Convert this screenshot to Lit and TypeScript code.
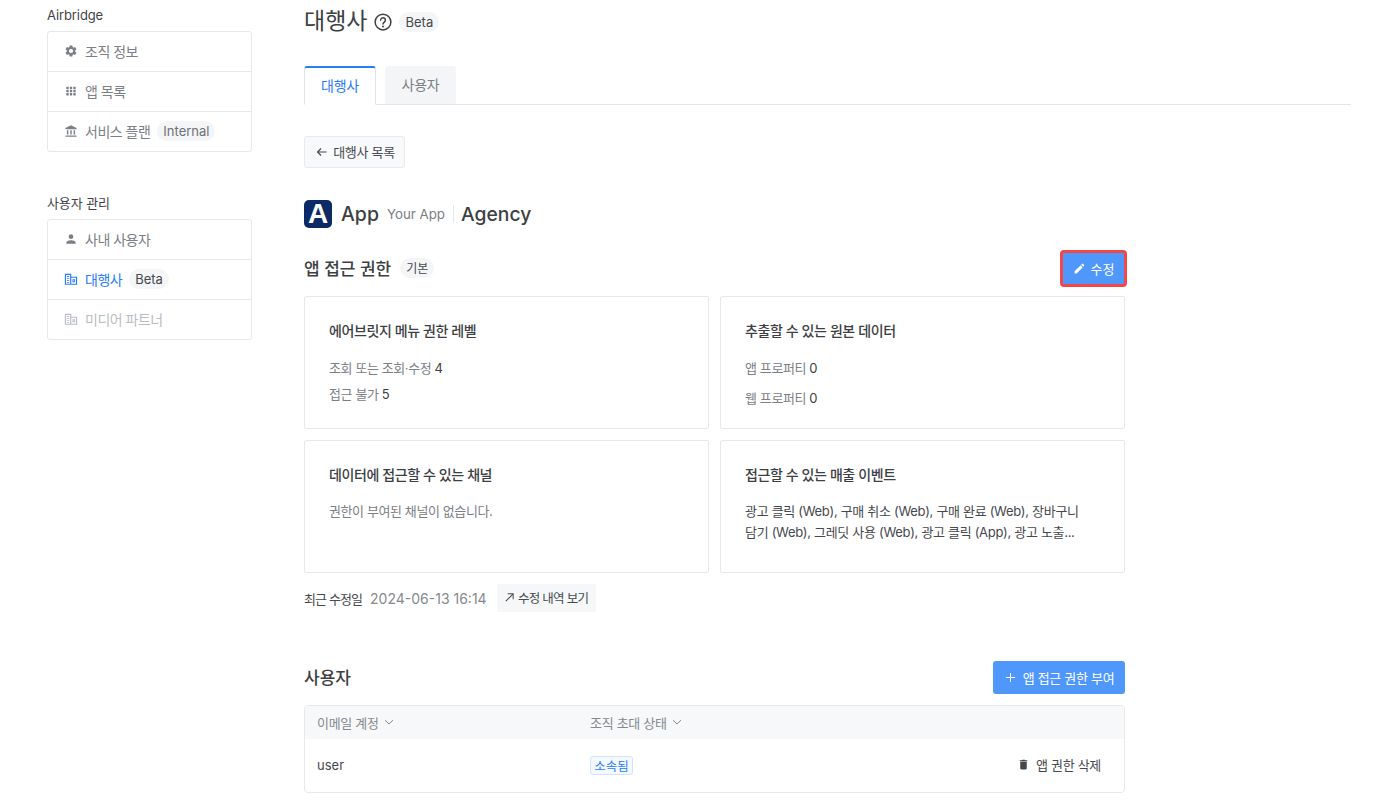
import { LitElement, html, css, svg } from "lit";
import { customElement } from "lit/decorators.js";

const ic = (p: unknown, s = 14, cls = "") => html`<svg class=${cls} width=${s} height=${s} viewBox="0 0 24 24" fill="currentColor">${p}</svg>`;
const gear = svg`<path d="M19.14 12.94c.04-.3.06-.61.06-.94s-.02-.64-.07-.94l2.03-1.58a.49.49 0 0 0 .12-.61l-1.92-3.32a.49.49 0 0 0-.59-.22l-2.39.96a7 7 0 0 0-1.62-.94l-.36-2.54a.48.48 0 0 0-.48-.41h-3.84a.48.48 0 0 0-.47.41l-.36 2.54c-.59.24-1.13.57-1.62.94l-2.39-.96a.49.49 0 0 0-.59.22L2.74 8.87a.48.48 0 0 0 .12.61l2.03 1.58c-.05.3-.09.63-.09.94s.02.64.07.94l-2.03 1.58a.49.49 0 0 0-.12.61l1.92 3.32c.12.22.37.29.59.22l2.39-.96c.5.38 1.03.7 1.62.94l.36 2.54c.05.24.24.41.48.41h3.84c.24 0 .44-.17.47-.41l.36-2.54c.59-.24 1.13-.56 1.62-.94l2.39.96c.22.08.47 0 .59-.22l1.92-3.32a.48.48 0 0 0-.12-.61l-2.01-1.58zM12 15.6a3.6 3.6 0 1 1 0-7.2 3.6 3.6 0 0 1 0 7.2z"/>`;
const apps = svg`<path d="M4 4.500h4v4H4zM10 4.500h4v4h-4zM16 4.500h4v4h-4zM4 10h4v4H4zM10 10h4v4h-4zM16 10h4v4h-4zM4 15.500h4v4H4zM10 15.500h4v4h-4zM16 15.500h4v4h-4z"/>`;
const bank = svg`<path d="M12 2 2.500 7v2h19V7L12 2zM5 10.500v7.500h2.500v-7.500H5zm5.750 0v7.500h2.500v-7.500h-2.500zm5.750 0v7.500H19v-7.500h-2.500zM2.500 19.500V22h19v-2.500h-19z"/>`;
const person = svg`<path d="M12 12a4 4 0 1 0 0-8 4 4 0 0 0 0 8zm0 2c-2.670 0-8 1.340-8 4v2h16v-2c0-2.660-5.330-4-8-4z"/>`;
const agency = svg`<path fill-rule="evenodd" d="M1.500 3h11v5h10v14h-21V3zm2 2v15h7V5h-7zm9 5v10h8V10h-8zM5 7h4v1.500H5zm0 3.500h4V12H5zM5 14h4v1.500H5zm0 3h4v1.500H5zM14.500 12.500h4.500v5h-4.500zm1.500 1.500v2h1.500v-2z"/>`;
const pencil = svg`<path d="M3 17.250V21h3.750L17.810 9.940l-3.750-3.750L3 17.250zM20.710 7.040a1 1 0 0 0 0-1.410l-2.340-2.340a1 1 0 0 0-1.410 0l-1.830 1.830 3.750 3.750 1.830-1.830z"/>`;
const trash = svg`<path d="M6 19c0 1.100.9 2 2 2h8c1.100 0 2-.9 2-2V7H6v12zM19 4h-3.500l-1-1h-5l-1 1H5v2h14V4z"/>`;
const chev = html`<svg class="chev" width="10" height="10" viewBox="0 0 10 10" fill="none" stroke="currentColor" stroke-width="1"><path d="M1 3.200 5 7l4-3.800"/></svg>`;

@customElement("app-root")
export class AppRoot extends LitElement {
  static styles = css`
    :host { display: block; width: 1400px; height: 800px; overflow: hidden; background: #fff; color: #3c4043;
      font-family: Inter, "Noto Sans CJK KR", sans-serif; font-size: 14px; }
    * { box-sizing: border-box; }
    .page { display: flex; align-items: flex-start; padding-left: 47px; }
    .side { width: 205px; flex: none; margin-right: 52px; padding-top: 7px; }
    .side-label { font-size: 13px; line-height: 16px; height: 24px; color: #3f4347; letter-spacing: -0.1px; }
    .menu { border: 1px solid #e6e8ec; border-radius: 3px; margin-bottom: 43px; }
    .mi { height: 40px; display: flex; align-items: center; padding: 0 0 2px 16px; gap: 7px; color: #7b8085; border-top: 1px solid #e6e8ec; font-size: 14px; }
    .mi:first-child { border-top: none; height: 39px; }
    .mi svg { flex: none; }
    .mi > span:not(.chip) { letter-spacing: -0.5px; }
    .mi.on { color: #2a7cf6; }
    .mi.off { color: #b9bdc2; }
    .chip { display: inline-flex; align-items: center; height: 20px; padding: 0 6px; border-radius: 10px; background: #f4f5f7; color: #44484c; font-size: 13px; }
    .mi .chip.grey { color: #6c7176; }
    .main { width: 1047px; flex: none; }
    .title-row { height: 66px; display: flex; align-items: flex-start; padding-top: 6px; }
    h1 { margin: 0; font-size: 23px; line-height: 30px; font-weight: 400; color: #3c4043; }
    .q { margin: 7px 0 0 7px; color: #3c4043; }
    .title-row .chip { margin: 6px 0 0 7px; }
    .tabs { display: flex; height: 39px; border-bottom: 1px solid #e3e5ea; gap: 9px; }
    .tab { height: 39px; width: 72px; display: flex; align-items: center; justify-content: center; font-size: 14px; background: #f4f5f7; color: #7b8085; border-radius: 3px 3px 0 0; padding-bottom: 2px; letter-spacing: -0.2px; }
    .tab.on { background: #fff; color: #2a7cf6; border: 1px solid #dfe3ea; border-top: 2px solid #2a7cf6; border-bottom: 1px solid #fff; }
    .tab.two { width: 71px; height: 38px; }
    .back { margin-top: 31px; display: flex; align-items: center; gap: 5px; height: 32px; width: 101px; justify-content: center; background: #f8f9fa; border: 1px solid #e8eaed; border-radius: 3px; font-size: 13px; color: #45494d; letter-spacing: -0.3px; padding: 0 0 1px 2px; }
    .brand { display: flex; align-items: center; height: 28px; margin-top: 32px; }
    .logo { width: 28px; height: 28px; flex: none; background: #0c2a66; border-radius: 5px; display: flex; align-items: center; justify-content: center; margin-right: 9px; color: #fff; font: 700 28px/1 "Liberation Sans", sans-serif; }
    .app { font-size: 19.500px; font-weight: 500; color: #3c4043; }
    .your { font-size: 13.300px; color: #7b8085; margin-left: 8px; }
    .sep { width: 1px; height: 18px; background: #e3e5ea; margin: 0 7px 0 8px; }
    .agency { font-size: 19.300px; font-weight: 500; color: #3c4043; }
    .content { width: 821px; }
    .sec { display: flex; align-items: center; justify-content: space-between; height: 37px; margin-top: 22px; }
    .sec-l { display: flex; align-items: center; padding-bottom: 2px; }
    h2 { margin: 0; font-size: 17px; font-weight: 500; color: #3c4043; }
    .sec-l .chip { font-size: 12px; margin-left: 9px; padding: 0 6px; }
    .edit { width: 67px; height: 37px; margin-right: -2px; border: 3px solid #f4474a; border-radius: 4px; background: #4f97fb; color: #fff; display: flex; align-items: center; justify-content: center; gap: 5px; font-size: 13px; padding-bottom: 1px; }
    .cards { display: grid; grid-template-columns: 405px 405px; grid-auto-rows: 133px; gap: 11px; margin-top: 9px; }
    .card { border: 1px solid #e6e8ec; border-radius: 2px; padding: 25px 24px 0; }
    .card h3 { margin: 0 0 19px; font-size: 14px; line-height: 18px; font-weight: 500; color: #3c4043; letter-spacing: -0.4px; }
    .line { font-size: 13px; line-height: 18px; color: #7b8085; margin-bottom: 8px; letter-spacing: -0.4px; }
    .line b { font-weight: 400; color: #3c4043; }
    .lines2 .line { margin-bottom: 12px; }
    .none { margin-top: -1px; }
    .txt { font-size: 13px; line-height: 21px; color: #45494d; margin-top: -2px; letter-spacing: -0.31px; }
    .foot { display: flex; align-items: center; height: 28px; margin-top: 11px; font-size: 13px; color: #45494d; letter-spacing: -0.9px; }
    .foot .date { color: #85898e; margin-left: 8px; font-size: 14px; letter-spacing: 0; }
    .hist { margin-left: 10px; width: 99px; height: 28px; display: flex; align-items: center; justify-content: center; gap: 3px; background: #f6f7f9; border-radius: 2px; font-size: 12.500px; color: #45494d; letter-spacing: -0.7px; padding-bottom: 1px; }
    .users { display: flex; align-items: center; justify-content: space-between; margin-top: 49px; height: 33px; }
    .users h2 { padding-bottom: 2px; }
    .add { width: 132px; height: 33px; background: #4f97fb; color: #fff; border-radius: 3px; display: flex; align-items: center; justify-content: center; gap: 7px; font-size: 13px; letter-spacing: -0.3px; padding: 0 0 1px 1px; }
    .table { margin-top: 11px; border: 1px solid #e6e8ec; border-radius: 4px; height: 88px; overflow: hidden; }
    .row { display: grid; grid-template-columns: 273px 1fr auto; align-items: center; padding: 0 23px 0 12px; }
    .head { height: 33px; background: #f7f8fa; color: #85898e; font-size: 13px; letter-spacing: -0.3px; padding-bottom: 1px; }
    .head span { display: flex; align-items: center; gap: 5px; }
    .body { height: 54px; font-size: 13px; color: #45494d; padding-bottom: 2px; }
    .tag { display: inline-flex; align-items: center; height: 19px; width: 43px; justify-content: center; border: 1px solid #cfe3fd; background: #f4f9ff; color: #2a7cf6; border-radius: 3px; font-size: 12.500px; }
    .del { display: flex; align-items: center; gap: 6px; color: #45494d; font-size: 13px; letter-spacing: -0.3px; padding-bottom: 2px; }
  `;

  render() {
    return html`<div class="page">
      <aside class="side">
        <div class="side-label">Airbridge</div>
        <div class="menu">
          <div class="mi">${ic(gear)}<span>조직 정보</span></div>
          <div class="mi">${ic(apps)}<span>앱 목록</span></div>
          <div class="mi">${ic(bank)}<span>서비스 플랜</span><span class="chip grey">Internal</span></div>
        </div>
        <div class="side-label">사용자 관리</div>
        <div class="menu">
          <div class="mi">${ic(person)}<span>사내 사용자</span></div>
          <div class="mi on">${ic(agency)}<span>대행사</span><span class="chip">Beta</span></div>
          <div class="mi off">${ic(agency)}<span>미디어 파트너</span></div>
        </div>
      </aside>
      <main class="main">
        <div class="title-row">
          <h1>대행사</h1>
          <svg class="q" width="18" height="18" viewBox="0 0 24 24" fill="none" stroke="currentColor" stroke-width="2"><circle cx="12" cy="12" r="10.500"/><path d="M8.800 9.500a3.200 3.200 0 1 1 5 2.600c-1.100.8-1.800 1.400-1.800 2.700" stroke-linecap="round"/><circle cx="12" cy="18" r="1.300" fill="currentColor" stroke="none"/></svg>
          <span class="chip">Beta</span>
        </div>
        <div class="tabs"><div class="tab on">대행사</div><div class="tab two">사용자</div></div>
        <div class="back"><svg width="12" height="12" viewBox="0 0 12 12" fill="none" stroke="currentColor" stroke-width="1.100"><path d="M10.500 6h-9M5 2.500 1.500 6 5 9.500"/></svg>대행사 목록</div>
        <div class="content">
          <div class="brand">
            <div class="logo">A</div>
            <span class="app">App</span><span class="your">Your App</span><span class="sep"></span><span class="agency">Agency</span>
          </div>
          <div class="sec">
            <div class="sec-l"><h2>앱 접근 권한</h2><span class="chip">기본</span></div>
            <div class="edit">${ic(pencil, 13)}수정</div>
          </div>
          <div class="cards">
            <div class="card"><h3>에어브릿지 메뉴 권한 레벨</h3>
              <div class="line">조회 또는 조회·수정 <b>4</b></div>
              <div class="line">접근 불가 <b>5</b></div></div>
            <div class="card lines2"><h3>추출할 수 있는 원본 데이터</h3>
              <div class="line">앱 프로퍼티 <b>0</b></div>
              <div class="line">웹 프로퍼티 <b>0</b></div></div>
            <div class="card"><h3>데이터에 접근할 수 있는 채널</h3>
              <div class="line none">권한이 부여된 채널이 없습니다.</div></div>
            <div class="card"><h3>접근할 수 있는 매출 이벤트</h3>
              <div class="txt">광고 클릭 (Web), 구매 취소 (Web), 구매 완료 (Web), 장바구니<br />담기 (Web), 그레딧 사용 (Web), 광고 클릭 (App), 광고 노출...</div></div>
          </div>
          <div class="foot">최근 수정일<span class="date">2024-06-13 16:14</span>
            <div class="hist"><svg width="11" height="11" viewBox="0 0 12 12" fill="none" stroke="currentColor" stroke-width="1.100"><path d="M2 10 10 2M4 2h6v6"/></svg>수정 내역 보기</div>
          </div>
          <div class="users"><h2>사용자</h2>
            <div class="add"><svg width="11" height="11" viewBox="0 0 12 12" fill="none" stroke="currentColor" stroke-width="1.100"><path d="M6 1v10M1 6h10"/></svg>앱 접근 권한 부여</div>
          </div>
          <div class="table">
            <div class="row head"><span>이메일 계정 ${chev}</span><span>조직 초대 상태 ${chev}</span><span></span></div>
            <div class="row body"><span>user</span><span><span class="tag">소속됨</span></span><span class="del">${ic(trash, 13)}앱 권한 삭제</span></div>
          </div>
        </div>
      </main>
    </div>`;
  }
}
